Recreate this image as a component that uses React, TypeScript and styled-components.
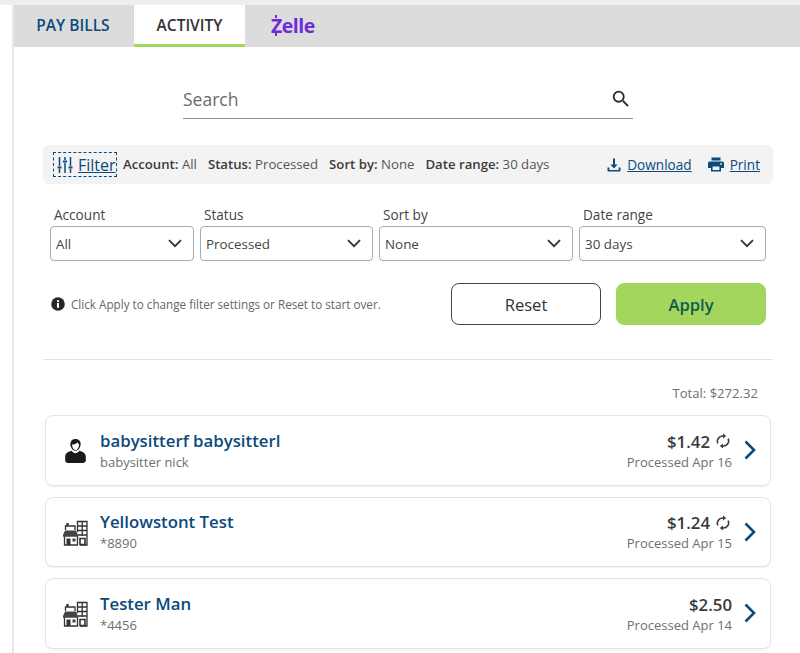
import React from "react";
import styled, { createGlobalStyle } from "styled-components";

const GlobalStyle = createGlobalStyle`
  html, body {
    margin: 0;
    padding: 0;
    background: #fff;
    font-family: "Open Sans", "Liberation Sans", sans-serif;
  }
  * { box-sizing: border-box; }
`;

const NAVY = "#0b4a7d";
const TEXT = "#333";
const MUTED = "#6f6f6f";

const Page = styled.div`
  height: 653px;
  overflow: hidden;
  padding-top: 5px;
  background: #fff;
  position: relative;
  &::before {
    content: "";
    position: absolute;
    left: 0;
    right: 0;
    top: 0;
    height: 5px;
    background: #eeeeee;
  }
`;

const Shell = styled.div`
  margin-left: 12px;
  border-left: 2px solid #e8e8e8;
  height: 100%;
`;

const TabBar = styled.nav`
  display: flex;
  height: 42px;
  background: #dcdcdc;
`;

const Tab = styled.div<{ $active?: boolean; $width: number }>`
  width: ${({ $width }) => $width}px;
  display: flex;
  align-items: center;
  justify-content: center;
  font-size: 15.5px;
  font-weight: 600;
  padding-top: 1px;
  padding-right: ${({ $active }) => ($active ? 0 : 2)}px;
  color: ${({ $active }) => ($active ? TEXT : NAVY)};
  background: ${({ $active }) => ($active ? "#fff" : "transparent")};
  border-bottom: 3px solid ${({ $active }) => ($active ? "#a3d65c" : "transparent")};
`;

const ZelleTab = styled.div`
  margin-left: 26px;
  display: flex;
  align-items: center;
  padding-bottom: 2px;
`;

const ZelleLogo = styled.span`
  position: relative;
  font-size: 19.5px;
  font-weight: 700;
  letter-spacing: -0.5px;
  color: #6d2bd9;
  &::before,
  &::after {
    content: "";
    position: absolute;
    left: 4px;
    width: 2px;
    height: 3px;
    background: #6d2bd9;
  }
  &::before { top: 3px; }
  &::after { bottom: 3px; }
`;

const Content = styled.main`
  padding: 0 27px 0 29px;
`;

const SearchRow = styled.div`
  width: 450px;
  height: 39px;
  margin: 33px auto 0;
  display: flex;
  align-items: center;
  justify-content: space-between;
  border-bottom: 1px solid #8d8d9c;
`;

const SearchLabel = styled.span`
  font-size: 17.5px;
  color: #6b6b6b;
`;

const SearchIcon = styled.svg`
  width: 22px;
  height: 22px;
  margin-right: 1px;
  fill: #2b2b2b;
`;

const FilterBar = styled.div`
  margin-top: 26px;
  height: 39px;
  background: #f3f3f3;
  border-radius: 6px;
  display: flex;
  align-items: center;
  padding: 0 13px 0 10px;
  font-size: 13.2px;
  color: #555;
`;

const FilterToggle = styled.a`
  display: flex;
  align-items: center;
  gap: 5px;
  height: 25px;
  width: 64px;
  padding-left: 3px;
  border: 1px dashed ${NAVY};
  color: ${NAVY};
  font-size: 16px;
  font-weight: 400;
  margin-right: 6px;
  text-decoration: underline;
`;

const Summary = styled.span`
  margin: -2px 11px 0 0;
  white-space: nowrap;
  b {
    font-weight: 600;
    color: #3c3c3c;
  }
`;

const BarActions = styled.div`
  margin-left: auto;
  display: flex;
  align-items: center;
  gap: 16px;
`;

const BarLink = styled.a`
  display: flex;
  align-items: center;
  gap: 6px;
  color: ${NAVY};
  font-size: 13.6px;
  font-weight: 400;
  text-decoration: underline;
  white-space: nowrap;
`;

const Filters = styled.div`
  margin: 22px 7px 0;
  display: grid;
  grid-template-columns: 144px 173px 194px 187px;
  column-gap: 6px;
`;

const Field = styled.div`
  display: flex;
  flex-direction: column;
`;

const FieldLabel = styled.label`
  font-size: 13.6px;
  line-height: 18px;
  padding-left: 4px;
  color: #444;
`;

const SelectBox = styled.div`
  height: 35px;
  margin-top: 2px;
  border: 1px solid #a9a9b2;
  border-radius: 4px;
  display: flex;
  align-items: center;
  justify-content: space-between;
  padding: 0 11px 0 5px;
  font-size: 13.4px;
  color: #444;
`;

const ActionRow = styled.div`
  margin: 22px 7px 0 8px;
  display: flex;
  align-items: center;
`;

const Hint = styled.div`
  display: flex;
  align-items: center;
  gap: 6px;
  font-size: 11.7px;
  color: #666;
`;

const Buttons = styled.div`
  margin-left: auto;
  display: flex;
  gap: 15px;
`;

const Button = styled.button<{ $primary?: boolean }>`
  width: 150px;
  height: 42px;
  border-radius: 8px;
  font-family: inherit;
  font-size: 16.6px;
  font-weight: ${({ $primary }) => ($primary ? 600 : 500)};
  padding: 0;
  color: ${({ $primary }) => ($primary ? "#0f5a55" : "#333")};
  background: ${({ $primary }) => ($primary ? "#a3d65c" : "#fff")};
  border: 1px solid ${({ $primary }) => ($primary ? "#a3d65c" : "#444")};
`;

const Divider = styled.hr`
  margin: 34px 0 0;
  border: 0;
  border-top: 1px solid #e2e2e2;
`;

const Total = styled.div`
  margin-top: 25px;
  padding-right: 15px;
  text-align: right;
  font-size: 13.1px;
  line-height: 17px;
  color: ${MUTED};
`;

const List = styled.div`
  margin: 13px 2px 0;
  display: flex;
  flex-direction: column;
  gap: 11px;
`;

const Card = styled.article`
  height: 70.5px;
  border: 1px solid #e3e3e6;
  border-radius: 8px;
  box-shadow: 0 1px 2px rgba(0, 0, 0, 0.06);
  display: flex;
  align-items: center;
  padding: 0 14px 0 13px;
  background: #fff;
`;

const Avatar = styled.div`
  width: 32px;
  display: flex;
  justify-content: center;
  margin-right: 9px;
  margin-top: 2px;
`;

const Payee = styled.div`
  display: flex;
  flex-direction: column;
`;

const PayeeName = styled.div`
  font-size: 16.8px;
  line-height: 22px;
  padding-bottom: 1px;
  font-weight: 600;
  color: ${NAVY};
`;

const SubText = styled.div`
  font-size: 13px;
  line-height: 18px;
  color: ${MUTED};
`;

const AmountCol = styled.div`
  margin-left: auto;
  margin-right: -1px;
  display: flex;
  flex-direction: column;
  align-items: flex-end;
`;

const Amount = styled.div`
  display: flex;
  align-items: center;
  gap: 6px;
  font-size: 16.8px;
  line-height: 23px;
  font-weight: 600;
  color: #3a3a3a;
`;

const RepeatWrap = styled.span`
  display: flex;
  margin-right: 2px;
`;

const Chevron = styled.svg`
  width: 12px;
  height: 20px;
  margin-left: 13px;
  fill: none;
  stroke: ${NAVY};
  stroke-width: 2.6;
`;

const SelectChevron = () => (
  <svg width="14" height="9" viewBox="0 0 14 9" fill="none" stroke="#333" strokeWidth="1.8">
    <path d="M1 1.2l6 6 6-6" />
  </svg>
);

const SliderIcon = () => (
  <svg width="16" height="18" viewBox="0 0 16 18" stroke={NAVY} strokeWidth="1.5" fill="none">
    <path d="M2.500 1v9M2.500 13v4M8 1v3M8 7v10M13.500 1v9M13.500 13v4" />
    <path d="M.5 11.500h4M6 5.500h4M11.500 11.500h4" strokeWidth="1.8" />
  </svg>
);

const DownloadIcon = () => (
  <svg width="14" height="14" viewBox="0 0 14 14" fill={NAVY}>
    <path d="M6 0.5h2v6h2.600L7 10.400 3.400 6.500H6z" />
    <path d="M0.5 9.500h1.800v2.400h9.400V9.500h1.800v3.200a.8.8 0 0 1-.8.8H1.300a.8.8 0 0 1-.8-.8z" />
  </svg>
);

const PrintIcon = () => (
  <svg width="16" height="15" viewBox="0 0 16 15" fill={NAVY}>
    <path d="M3.500 0.5h9v3h-9z" />
    <path d="M1.800 4.500h12.400A1.800 1.800 0 0 1 16 6.300V11h-3v3.500H3V11H0V6.300a1.800 1.800 0 0 1 1.800-1.800zM4.600 9.500v3.500h6.800V9.500zM13 6a.9.9 0 1 0 0 1.800A.9.9 0 0 0 13 6z" fillRule="evenodd" />
  </svg>
);

const InfoIcon = () => (
  <svg width="14" height="14" viewBox="0 0 14 14">
    <circle cx="7" cy="7" r="6.800" fill="#262626" />
    <rect x="6" y="6" width="2" height="4.800" fill="#fff" />
    <rect x="6" y="3.200" width="2" height="1.800" fill="#fff" />
  </svg>
);

const PersonIcon = () => (
  <svg width="21" height="26" viewBox="0 0 22 26" fill="#1a1a1a">
    <path d="M11 0.5c3.400 0 5.600 2.200 5.400 5.600-.1 1-.3 1.800-.6 2.500-.6 2.200-2.400 4.200-4.800 4.200S6.800 10.800 6.200 8.600C5.700 7.800 5.500 6.900 5.600 5.800 5.700 2.500 7.700.5 11 .5z" />
    <path d="M7 12.800c1 1.500 2.400 2.500 4 2.500s3-1 4-2.500c3.800 1 6.800 2.600 6.800 6.400v3.800c0 1.600-1.500 2.500-3 2.500H3.200c-1.500 0-3-.9-3-2.500v-3.800C.2 15.400 3.200 13.800 7 12.800z" />
    <path d="M7.400 6.200c2-.2 4.600-.8 6-2.200.4 1 1 1.800 1.400 2.400-.1 2.800-1.700 5.600-3.800 5.600S7.500 9.200 7.400 6.200z" fill="#fff" />
  </svg>
);

const BusinessIcon = () => (
  <svg width="26" height="26" viewBox="0 0 26 26">
    <g fill="none" stroke="#333" strokeWidth="1.300">
      <path d="M3.500 10V6h9.500v4" />
      <path d="M5.500 6V3" strokeWidth="2.400" />
      <path d="M15.500 12V1.500h9.500v23.500h-7" />
      <path d="M20.200 1.500V16M15.500 6h9.500M15.500 10.500h9.500M15.500 15h9.500" />
      <path d="M2.500 16v9h13v-9" />
    </g>
    <path d="M3 10.500h11l2 4.500v1.800H1V15z" fill="#444" />
    <path d="M4.500 18.500h4v6.500h-4z" fill="#333" />
    <path d="M18 18.500h5v6h-5z" fill="none" stroke="#333" strokeWidth="1.600" />
    <path d="M10.500 18.500h3v3h-3z" fill="#444" />
  </svg>
);

const RepeatIcon = () => (
  <svg width="14" height="16" viewBox="0 0 15 16" fill="none" stroke="#3a3a3a" strokeWidth="1.700">
    <path d="M2 10.500A5.600 5.600 0 0 1 7.500 2.600h1.300" />
    <path d="M13 5.500a5.600 5.600 0 0 1-5.500 7.900H6.200" />
    <path d="M7.500 0l3.400 2.600-3.400 2.600zM7.500 10.800v5.200l-3.400-2.600z" fill="#3a3a3a" stroke="none" />
  </svg>
);

type Activity = {
  name: string;
  sub: string;
  amount: string;
  date: string;
  recurring?: boolean;
  person?: boolean;
};

const activities: Activity[] = [
  { name: "babysitterf babysitterl", sub: "babysitter nick", amount: "$1.42", date: "Processed Apr 16", recurring: true, person: true },
  { name: "Yellowstont Test", sub: "*8890", amount: "$1.24", date: "Processed Apr 15", recurring: true },
  { name: "Tester Man", sub: "*4456", amount: "$2.50", date: "Processed Apr 14" },
];

const filters = [
  { label: "Account", value: "All" },
  { label: "Status", value: "Processed" },
  { label: "Sort by", value: "None" },
  { label: "Date range", value: "30 days" },
];

const App = () => {
  return (
    <Page>
      <GlobalStyle />
      <Shell>
        <TabBar>
          <Tab $width={120}>PAY BILLS</Tab>
          <Tab $width={111} $active>ACTIVITY</Tab>
          <ZelleTab>
            <ZelleLogo>Zelle</ZelleLogo>
          </ZelleTab>
        </TabBar>
        <Content>
          <SearchRow>
            <SearchLabel>Search</SearchLabel>
            <SearchIcon viewBox="0 0 24 24">
              <path d="M15.500 14h-.79l-.28-.27A6.470 6.470 0 0 0 16 9.500 6.500 6.500 0 1 0 9.500 16c1.610 0 3.090-.59 4.230-1.570l.27.28v.79l5 4.990L20.490 19l-4.990-5zm-6 0C7.010 14 5 11.990 5 9.500S7.010 5 9.500 5 14 7.010 14 9.500 11.990 14 9.500 14z" />
            </SearchIcon>
          </SearchRow>
          <FilterBar>
            <FilterToggle>
              <SliderIcon />
              Filter
            </FilterToggle>
            <Summary><b>Account:</b> All</Summary>
            <Summary><b>Status:</b> Processed</Summary>
            <Summary><b>Sort by:</b> None</Summary>
            <Summary><b>Date range:</b> 30 days</Summary>
            <BarActions>
              <BarLink><DownloadIcon />Download</BarLink>
              <BarLink><PrintIcon />Print</BarLink>
            </BarActions>
          </FilterBar>
          <Filters>
            {filters.map((f) => (
              <Field key={f.label}>
                <FieldLabel>{f.label}</FieldLabel>
                <SelectBox>
                  {f.value}
                  <SelectChevron />
                </SelectBox>
              </Field>
            ))}
          </Filters>
          <ActionRow>
            <Hint>
              <InfoIcon />
              Click Apply to change filter settings or Reset to start over.
            </Hint>
            <Buttons>
              <Button>Reset</Button>
              <Button $primary>Apply</Button>
            </Buttons>
          </ActionRow>
          <Divider />
          <Total>Total: $272.32</Total>
          <List>
            {activities.map((a) => (
              <Card key={a.name}>
                <Avatar>{a.person ? <PersonIcon /> : <BusinessIcon />}</Avatar>
                <Payee>
                  <PayeeName>{a.name}</PayeeName>
                  <SubText>{a.sub}</SubText>
                </Payee>
                <AmountCol>
                  <Amount>
                    {a.amount}
                    {a.recurring && <RepeatWrap><RepeatIcon /></RepeatWrap>}
                  </Amount>
                  <SubText>{a.date}</SubText>
                </AmountCol>
                <Chevron viewBox="0 0 12 20">
                  <path d="M1.500 1.500L10 10l-8.500 8.500" />
                </Chevron>
              </Card>
            ))}
          </List>
        </Content>
      </Shell>
    </Page>
  );
};

export default App;
